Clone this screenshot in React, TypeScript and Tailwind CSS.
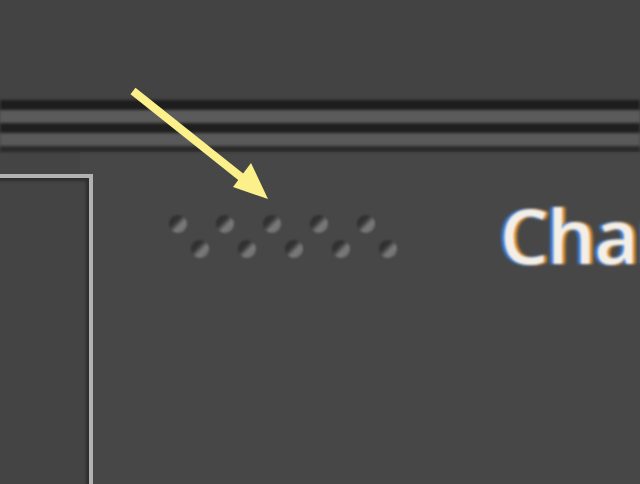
const dotClass =
  'h-[18px] w-[18px] shrink-0 rounded-full bg-[linear-gradient(135deg,#2a2a2a_0%,#343434_38%,#7a7a7a_60%,#6a6a6a_100%)] blur-[1.2px]';

function Grip() {
  const row = [0, 1, 2, 3, 4];
  return (
    <div className="flex flex-col gap-[7px]">
      <div className="flex gap-[29px]">
        {row.map((i) => (
          <span key={i} className={dotClass} />
        ))}
      </div>
      <div className="ml-[22px] flex gap-[29px]">
        {row.map((i) => (
          <span key={i} className={dotClass} />
        ))}
      </div>
    </div>
  );
}

function Arrow() {
  return (
    <svg
      className="pointer-events-none absolute left-0 top-0"
      width="640"
      height="484"
      viewBox="0 0 640 484"
    >
      <line x1="133" y1="91" x2="246" y2="181" stroke="#fbf08a" strokeWidth="8" />
      <polygon points="268,199 233,187 251,163" fill="#fbf08a" />
    </svg>
  );
}

export default function App() {
  return (
    <div className="relative h-[484px] w-[640px] overflow-hidden bg-[#444444] font-['Open_Sans','Liberation_Sans',sans-serif]">
      <div className="h-[100px] bg-[#434343]" />
      <div className="blur-[1.5px]">
        <div className="h-[10px] bg-[#1d1d1d]" />
        <div className="h-[13px] bg-[#5b5b5b]" />
        <div className="h-[10px] bg-[#1f1f1f]" />
        <div className="h-[13px] bg-[#595959]" />
        <div className="h-[6px] bg-[#2a2a2a]" />
      </div>
      <div className="flex h-[332px]">
        <div className="w-[80px] shrink-0 pt-[22px] blur-[0.6px]">
          <div className="h-full w-[93px] border-r-[4px] border-t-[4px] border-[#b2b2b2] bg-[#444444] shadow-[inset_-3px_3px_3px_#2e2e2e]" />
        </div>
        <div className="flex min-w-0 flex-1 items-start overflow-hidden border-t border-[#4e4e4e] bg-[#474747] pl-[89px] pt-[62px]">
          <Grip />
          <span className="ml-[103px] mt-[-18px] whitespace-nowrap text-[76px] font-semibold leading-none tracking-[-1px] text-[#f4efe6] [text-shadow:-3px_0_2px_#3a86f0,3px_0_2px_#e8922e] blur-[0.8px]">
            Channel
          </span>
        </div>
      </div>
      <Arrow />
    </div>
  );
}
